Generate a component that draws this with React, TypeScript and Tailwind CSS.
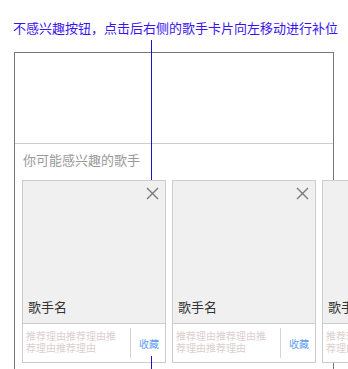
import React from "react"

function CloseIcon() {
  return (
    <svg width="13" height="13" viewBox="0 0 13 13" className="absolute top-[6px] right-[6px]">
      <path d="M1 1 L12 12 M12 1 L1 12" stroke="#7a7a7a" strokeWidth="1.4" fill="none" />
    </svg>
  )
}

function SingerCard() {
  return (
    <div className="shrink-0 w-[144px] h-[183px] border border-[#cccccc] bg-[#f0f0f0] flex flex-col">
      <div className="relative flex-1 flex items-end pl-[5px] pb-[6px]">
        <CloseIcon />
        <span className="text-[13px] leading-[20px] text-[#333]">歌手名</span>
      </div>
      <div className="h-[39px] border-t border-[#cccccc] bg-white flex">
        <div className="w-[107px] pl-[3px] pr-[10px] pt-[6px] text-[10px] leading-[12px] text-[#dccfcf] break-all">
          推荐理由推荐理由推荐理由推荐理由
        </div>
        <div className="my-[4px] border-l border-[#d4d4d4]" />
        <div className="flex-1 flex items-center justify-center pl-[2px] text-[10px] text-[#5c9cf0]">收藏</div>
      </div>
    </div>
  )
}

export default function App() {
  return (
    <div
      className="relative w-[348px] h-[369px] overflow-hidden bg-white"
      style={{ fontFamily: '"Noto Sans CJK SC", "Noto Sans", sans-serif' }}
    >
      <p className="pt-[19px] pl-[13px] text-[13px] leading-[18px] tracking-[0px] text-[#3a14ee] whitespace-nowrap">
        不感兴趣按钮，点击后右侧的歌手卡片向左移动进行补位
      </p>

      <div className="mt-[15px] ml-[14px] w-[320px] h-[330px] border-x border-t border-[#777777]">
        <div className="h-[91px] border-b border-[#cccccc]" />
        <div className="pt-[6px] pl-[8px] text-[13px] leading-[20px] text-[#999999]">你可能感兴趣的歌手</div>
        <div className="mt-[10px] pl-[7px] flex gap-[6px]">
          <SingerCard />
          <SingerCard />
          <SingerCard />
        </div>
      </div>

      {/* annotation lines */}
      <div className="absolute left-[151px] top-[40px] w-px h-[140px] bg-[#1a14c8]" />
      <div className="absolute left-[151px] top-[356px] w-px h-[13px] bg-[#1a14c8]" />
    </div>
  )
}
